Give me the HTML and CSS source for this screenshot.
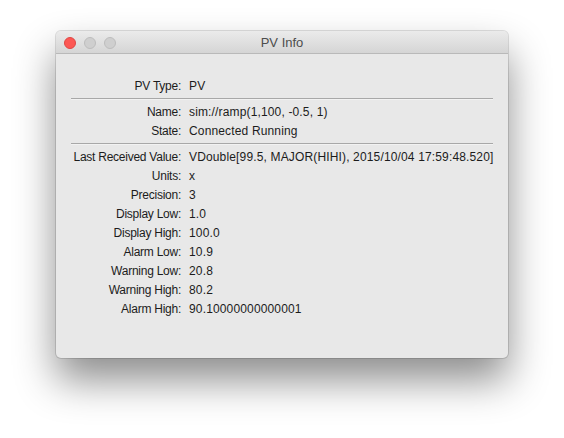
FILE: index.html
```html
<!DOCTYPE html>
<html>
<head>
<meta charset="utf-8">
<link rel="stylesheet" href="styles.css">
</head>
<body>
<div class="window">
  <div class="titlebar">
    <div class="lights">
      <span class="light red"></span>
      <span class="light"></span>
      <span class="light"></span>
    </div>
    <div class="title">PV Info</div>
  </div>
  <div class="content">
    <div class="grid">
      <div class="label">PV Type:</div><div class="value">PV</div>
    </div>
    <div class="sep"></div>
    <div class="grid">
      <div class="label">Name:</div><div class="value">sim://ramp(1,100, -0.5, 1)</div>
      <div class="label">State:</div><div class="value">Connected Running</div>
    </div>
    <div class="sep"></div>
    <div class="grid">
      <div class="label">Last Received Value:</div><div class="value">VDouble[99.5, MAJOR(HIHI), 2015/10/04 17:59:48.520]</div>
      <div class="label">Units:</div><div class="value">x</div>
      <div class="label">Precision:</div><div class="value">3</div>
      <div class="label">Display Low:</div><div class="value">1.0</div>
      <div class="label">Display High:</div><div class="value">100.0</div>
      <div class="label">Alarm Low:</div><div class="value">10.9</div>
      <div class="label">Warning Low:</div><div class="value">20.8</div>
      <div class="label">Warning High:</div><div class="value">80.2</div>
      <div class="label">Alarm High:</div><div class="value">90.10000000000001</div>
    </div>
  </div>
</div>
</body>
</html>
```

FILE: styles.css
```css
html, body {
  margin: 0;
  padding: 0;
  background: #ffffff;
}
body {
  width: 564px;
  height: 438px;
  overflow: hidden;
  font-family: "Liberation Sans", Arial, sans-serif;
}
.window {
  margin: 31px 0 0 56px;
  width: 452px;
  height: 327px;
  background: #e8e8e8;
  border-radius: 5px;
  box-shadow: 0 0 0 1px rgba(0,0,0,0.12), 0 22px 40px rgba(0,0,0,0.45);
  overflow: hidden;
  display: flex;
  flex-direction: column;
}
.titlebar {
  height: 22px;
  border-bottom: 1px solid #b9b9b9;
  background: linear-gradient(#ebebeb, #d5d5d5);
  position: relative;
  display: flex;
  align-items: center;
  justify-content: center;
  flex: none;
}
.lights {
  position: absolute;
  left: 8px;
  top: 6px;
  display: flex;
  gap: 8px;
}
.light {
  width: 12px;
  height: 12px;
  box-sizing: border-box;
  border-radius: 50%;
  background: #cfcfcf;
  border: 1px solid #bdbdbd;
}
.light.red {
  background: #fc5753;
  border-color: #df4744;
}
.title {
  font-size: 13px;
  color: #4d4d4d;
}
.content {
  padding: 23px 15px 0 15px;
}
.grid {
  display: grid;
  grid-template-columns: 110px auto;
  column-gap: 8px;
}
.label, .value {
  font-size: 12px;
  line-height: 19px;
  color: #1c1c1c;
  white-space: nowrap;
}
.value {
  letter-spacing: 0.15px;
}
.label {
  text-align: right;
  letter-spacing: -0.25px;
}
.sep {
  height: 1px;
  background: #a8a8a8;
  border-bottom: 1px solid #f2f2f2;
  margin: 2px 0 3px 0;
}
```
